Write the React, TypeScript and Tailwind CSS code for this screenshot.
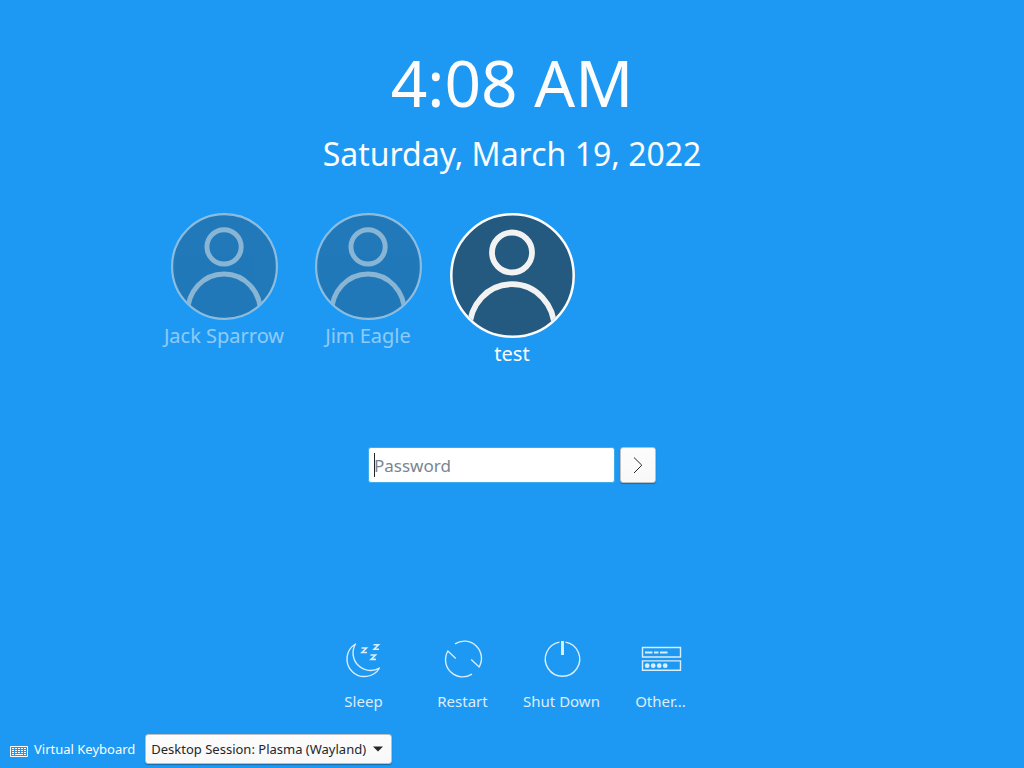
import { useState, type ReactNode } from "react";

type User = { name: string };

const users: User[] = [{ name: "Jack Sparrow" }, { name: "Jim Eagle" }, { name: "test" }];

function Avatar({ selected }: { selected: boolean }) {
  const fade = selected ? "" : "opacity-50";
  return (
    <svg
      viewBox="0 0 125 125"
      className={selected ? "size-[125px]" : "size-[107px]"}
      aria-hidden="true"
    >
      <defs>
        <clipPath id="avatar-clip">
          <circle cx="62.5" cy="62.5" r="60" />
        </clipPath>
      </defs>
      <circle cx="62.5" cy="62.5" r="62" fill="#255a80" className={fade} />
      <g clipPath="url(#avatar-clip)" fill="none" stroke="#f2f2f2" strokeWidth="5.8" className={fade}>
        <circle cx="62" cy="39.5" r="20" />
        <path d="M19.500 116C19.500 92 37.500 71.200 62 71.200S104.500 92 104.500 116" />
      </g>
      <circle cx="62.5" cy="62.5" r="61.2" fill="none" stroke="#fcfcfc" strokeWidth="2.5" className={fade} />
    </svg>
  );
}

function ActionIcon({ children }: { children: ReactNode }) {
  return (
    <svg
      viewBox="0 0 48 48"
      className="size-12"
      fill="none"
      stroke="currentColor"
      strokeWidth="1.4"
      aria-hidden="true"
    >
      {children}
    </svg>
  );
}

const actions: { label: string; icon: ReactNode }[] = [
  {
    label: "Sleep",
    icon: (
      <ActionIcon>
        <path strokeLinejoin="round" d="M15.500 9A17.500 17.500 0 1 0 39.500 33A17.500 17.500 0 0 1 15.500 9Z" />
        <path strokeWidth="1.6" d="M21.500 13h5l-4.500 4.500h5M33.500 9.700h5l-4.500 4.600h5M30.500 20h5l-4.500 4.400h5" />
      </ActionIcon>
    ),
  },
  {
    label: "Restart",
    icon: (
      <ActionIcon>
        <path d="M16 8.800A17.200 17.200 0 0 1 40.100 32L32.200 24.500" />
        <path d="M33 39.200A17.200 17.200 0 0 1 8.900 16L16.800 23.500" />
      </ActionIcon>
    ),
  },
  {
    label: "Shut Down",
    icon: (
      <ActionIcon>
        <path d="M27.500 7.100A17.200 17.200 0 1 1 21.500 7.100" />
        <path strokeWidth="3" d="M24.500 6v14" />
      </ActionIcon>
    ),
  },
  {
    label: "Other...",
    icon: (
      <ActionIcon>
        <path d="M5.500 12.500h38v9.500H5.500zM5.500 25.900h38v9.400H5.500z" />
        <path strokeWidth="2" d="M8 17.400H15.500M17 17.400H21.500M23 17.400H30.500" />
        <g fill="currentColor" stroke="none">
          <circle cx="10.2" cy="30.7" r="2.4" />
          <circle cx="16.2" cy="30.7" r="2.4" />
          <circle cx="22.2" cy="30.7" r="2.4" />
          <circle cx="28.2" cy="30.7" r="2.4" />
        </g>
      </ActionIcon>
    ),
  },
];

function KeyboardIcon() {
  return (
    <svg viewBox="0 0 18 11" className="mt-0.5 h-[11px] w-[18px]" fill="none" stroke="currentColor" aria-hidden="true">
      <path d="M.5.5h17v10H.5z" />
      <path strokeDasharray="2 1" d="M2 2.500h14M2 4.500h14M2 6.500h14" />
      <path d="M2 8.500h2M5 8.500h8M14 8.500h2" />
    </svg>
  );
}

export default function App() {
  const [selected, setSelected] = useState("test");
  const [password, setPassword] = useState("");

  return (
    <div className="flex min-h-screen flex-col bg-[#1d99f3] font-['Noto_Sans',sans-serif] text-[#fcfcfc]">
      <header className="flex flex-col items-center pt-[39px]">
        <h1 className="text-[64px] leading-[88px]">4:08 AM</h1>
        <p className="mt-1 text-[32px] leading-[46px]">Saturday, March 19, 2022</p>
      </header>

      <main className="flex flex-1 flex-col items-center">
        <div className="mt-9 grid h-[160px] grid-cols-[repeat(5,144px)] items-start">
          {users.map((user) => (
            <button
              key={user.name}
              type="button"
              onClick={() => setSelected(user.name)}
              className="flex flex-col items-center"
            >
              <Avatar selected={user.name === selected} />
              <span className={`text-[20px] leading-[32px] ${user.name === selected ? "" : "opacity-50"}`}>
                {user.name}
              </span>
            </button>
          ))}
        </div>

        <form className="mt-[74px] flex gap-[5px]" onSubmit={(event) => event.preventDefault()}>
          <div className="relative">
            <input
              type="password"
              aria-label="Password"
              placeholder="Password"
              value={password}
              onChange={(event) => setPassword(event.target.value)}
              className="h-9 w-[247px] rounded-[3px] border border-[#3daee9] bg-white px-[5px] text-[17px] text-[#232629] outline-none placeholder:text-[#7a8590]"
            />
            {password === "" && (
              <span className="pointer-events-none absolute top-1.5 left-1.5 h-6 w-px bg-[#232629]" />
            )}
          </div>
          <button
            type="submit"
            aria-label="Log in"
            className="flex size-9 items-center justify-center rounded-[3px] border border-[#bcbebf] bg-linear-to-b from-[#fcfcfc] to-[#f8f8f8] text-[#232629] shadow-[0_1px_1px_rgba(0,0,0,0.3)]"
          >
            <svg viewBox="0 0 22 22" className="size-[22px]" fill="none" stroke="currentColor" strokeWidth="1" aria-hidden="true">
              <path d="M7 3.500L14.800 11.200L7 19" />
            </svg>
          </button>
        </form>
      </main>

      <nav className="flex justify-center">
        {actions.map((action) => (
          <button
            key={action.label}
            type="button"
            className="flex w-[99px] flex-col items-center gap-2 opacity-85"
          >
            {action.icon}
            <span className="text-[15px] leading-5">{action.label}</span>
          </button>
        ))}
      </nav>

      <footer className="mt-[23px] flex items-center gap-[10px] pb-1 pl-[10px] text-[13px]">
        <button type="button" className="flex items-center gap-1.5 pt-0.5">
          <KeyboardIcon />
          Virtual Keyboard
        </button>
        <div className="relative">
          <select
            aria-label="Desktop Session"
            className="h-[30px] w-[247px] appearance-none rounded-[3px] border border-[#bcbebf] bg-linear-to-b from-[#fcfcfc] to-[#f8f8f8] px-[5px] pt-0.5 text-[#232629] shadow-[0_1px_1px_rgba(0,0,0,0.3)]"
          >
            <option>Desktop Session: Plasma (Wayland)</option>
            <option>Desktop Session: Plasma (X11)</option>
          </select>
          <svg
            viewBox="0 0 10 6"
            className="pointer-events-none absolute top-3 right-[9px] h-[6px] w-[10px] fill-[#232629]"
            aria-hidden="true"
          >
            <path d="M0 .5h10L5 5.500z" />
          </svg>
        </div>
      </footer>
    </div>
  );
}
